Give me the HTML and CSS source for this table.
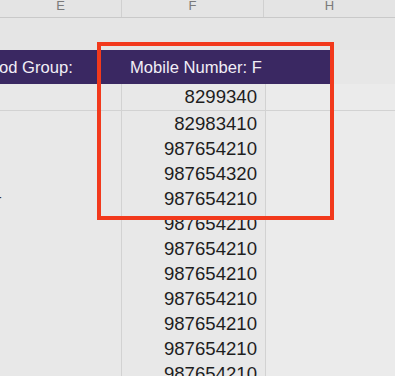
FILE: index.html
```html
<!DOCTYPE html>
<html>
<head>
<meta charset="utf-8">
<link rel="stylesheet" href="styles.css">
</head>
<body>
<div class="sheet">
  <div class="colhead">
    <div class="ch">E</div>
    <div class="ch">F</div>
    <div class="ch">H</div>
  </div>
  <div class="blank"></div>
  <div class="band">
    <div class="bc first">od Group:</div>
    <div class="bc second">Mobile Number: F</div>
  </div>
  <div class="rows">
    <div class="row tall"><div class="c"></div><div class="c num">8299340</div><div class="c"></div></div>
    <div class="row"><div class="c"></div><div class="c num">82983410</div><div class="c"></div></div>
    <div class="row"><div class="c"></div><div class="c num">987654210</div><div class="c"></div></div>
    <div class="row"><div class="c"></div><div class="c num">987654320</div><div class="c"></div></div>
    <div class="row"><div class="c dash">-</div><div class="c num">987654210</div><div class="c"></div></div>
    <div class="row"><div class="c"></div><div class="c num">987654210</div><div class="c"></div></div>
    <div class="row"><div class="c"></div><div class="c num">987654210</div><div class="c"></div></div>
    <div class="row"><div class="c"></div><div class="c num">987654210</div><div class="c"></div></div>
    <div class="row"><div class="c"></div><div class="c num">987654210</div><div class="c"></div></div>
    <div class="row"><div class="c"></div><div class="c num">987654210</div><div class="c"></div></div>
    <div class="row"><div class="c"></div><div class="c num">987654210</div><div class="c"></div></div>
    <div class="row"><div class="c"></div><div class="c num">987654210</div><div class="c"></div></div>
  </div>
  <div class="highlight"></div>
</div>
</body>
</html>
```
FILE: styles.css
```css
html, body {
  margin: 0;
  padding: 0;
  background: #e6e6e6;
}
body {
  width: 395px;
  height: 376px;
  overflow: hidden;
  font-family: "Liberation Sans", Arial, sans-serif;
}
.sheet {
  position: relative;
  width: 395px;
  height: 376px;
  background: #e7e7e7;
}
.colhead {
  display: grid;
  grid-template-columns: 122px 142px 1fr;
  height: 17px;
  border-bottom: 1px solid #c9c9c9;
  background: #e4e4e4;
}
.ch {
  color: #7a7a7a;
  font-size: 13px;
  line-height: 11px;
  text-align: center;
  border-right: 1px solid #d0d0d0;
}
.ch:last-child { border-right: none; }
.blank {
  height: 32px;
  background: #e5e5e5;
}
.band {
  display: grid;
  grid-template-columns: 122px 1fr;
  width: 332px;
  height: 34px;
  background: #3a2862;
  color: #f1eef6;
  font-size: 16.6px;
  align-items: center;
}
.bc.first {
  text-indent: -1px;
  padding-top: 1px;
}
.bc.second {
  padding-left: 8px;
  padding-top: 1px;
}
.rows {
  display: flex;
  flex-direction: column;
}
.row {
  display: grid;
  grid-template-columns: 122px 144px 1fr;
  height: 24px;
  border-bottom: 1px solid #d2d2d2;
}
.row.tall { height: 26px; }
.c {
  border-right: 1px solid #d2d2d2;
  background: #e8e8e8;
}
.c:last-child {
  border-right: none;
  background: #ebebeb;
}
.num {
  text-align: right;
  padding-right: 8px;
  font-size: 18.6px;
  line-height: 25px;
  color: #1e1e1e;
}
.row.tall .num { line-height: 26px; }
.dash {
  font-size: 14px;
  line-height: 22px;
  color: #333;
  text-indent: -3px;
}
.highlight {
  position: absolute;
  left: 97px;
  top: 42px;
  width: 229px;
  height: 170px;
  border: 4px solid #f2391c;
}
```
